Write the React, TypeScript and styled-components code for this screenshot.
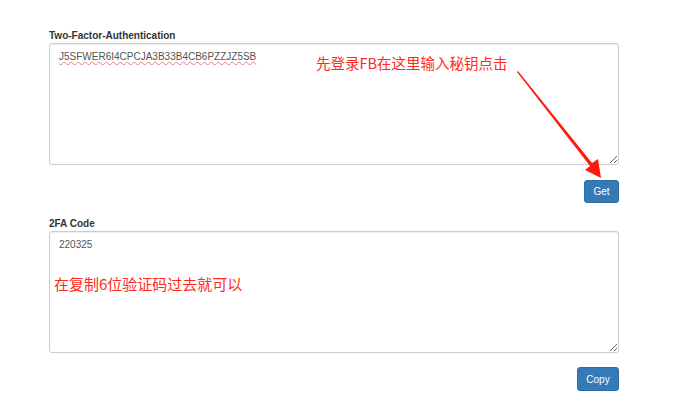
import styled, { createGlobalStyle } from 'styled-components';

const GlobalStyle = createGlobalStyle`
  html, body {
    margin: 0;
    padding: 0;
    background: #fff;
    font-family: "Liberation Sans", Arial, sans-serif;
    color: #333;
  }
`;

export default function App() {
  return (
    <>
      <GlobalStyle />
      <Page>
        <Form>
          <Group>
            <Label>Two-Factor-Authentication</Label>
            <Area>
              <Misspelt>J5SFWER6I4CPCJA3B33B4CB6PZZJZ5SB</Misspelt>
            </Area>
          </Group>
          <Actions>
            <Button $width={35}>Get</Button>
          </Actions>
          <Group>
            <Label>2FA Code</Label>
            <Area>220325</Area>
          </Group>
          <Actions $last>
            <Button $width={42} $height={24}>Copy</Button>
          </Actions>
        </Form>

        <Note $left={316} $top={53} $size={14.5}>先登录FB在这里输入秘钥点击</Note>
        <Note $left={54} $top={274} $size={15}>在复制6位验证码过去就可以</Note>
        <Arrow width="679" height="403" viewBox="0 0 679 403">
          <polygon
            points="517,72 518,71 592,163 598,159 601,178 585,170 590,166"
            fill="#ff1a0f"
          />
        </Arrow>
      </Page>
    </>
  );
}

const Page = styled.div`
  position: relative;
  width: 679px;
  height: 403px;
  overflow: hidden;
`;

const Form = styled.div`
  display: flex;
  flex-direction: column;
  width: 570px;
  margin-left: 49px;
  padding-top: 30px;
`;

const Group = styled.div`
  display: flex;
  flex-direction: column;
`;

const Label = styled.div`
  font-size: 10px;
  font-weight: bold;
  line-height: 12px;
  margin-bottom: 1px;
  color: #333;
`;

const Area = styled.div`
  box-sizing: border-box;
  height: 122px;
  padding: 6px 9px 5px;
  border: 1px solid #ccc;
  border-radius: 3px;
  box-shadow: inset 0 1px 1px rgba(0, 0, 0, 0.075);
  font-size: 10px;
  line-height: 14px;
  color: #555;
  resize: both;
  overflow: auto;
`;

const Misspelt = styled.span`
  text-decoration: underline wavy #e88080;
  text-decoration-thickness: 1px;
  text-underline-offset: 1px;
`;

const Actions = styled.div<{ $last?: boolean }>`
  display: flex;
  justify-content: flex-end;
  padding: ${p => (p.$last ? '14px 0 0' : '15px 0 15px')};
`;

const Button = styled.button<{ $width: number; $height?: number }>`
  box-sizing: border-box;
  width: ${p => p.$width}px;
  height: ${p => p.$height ?? 23}px;
  padding: 0;
  border: 1px solid #2e6da4;
  border-radius: 3px;
  background: #337ab7;
  color: #fff;
  font-family: "Liberation Sans", Arial, sans-serif;
  font-size: 10px;
  cursor: pointer;
`;

const Note = styled.div<{ $left: number; $top: number; $size: number }>`
  position: absolute;
  left: ${p => p.$left}px;
  top: ${p => p.$top}px;
  font-family: "Noto Sans CJK SC", "Liberation Sans", sans-serif;
  font-size: ${p => p.$size}px;
  line-height: 20px;
  color: #ff2a1a;
  white-space: nowrap;
`;

const Arrow = styled.svg`
  position: absolute;
  left: 0;
  top: 0;
  pointer-events: none;
`;
